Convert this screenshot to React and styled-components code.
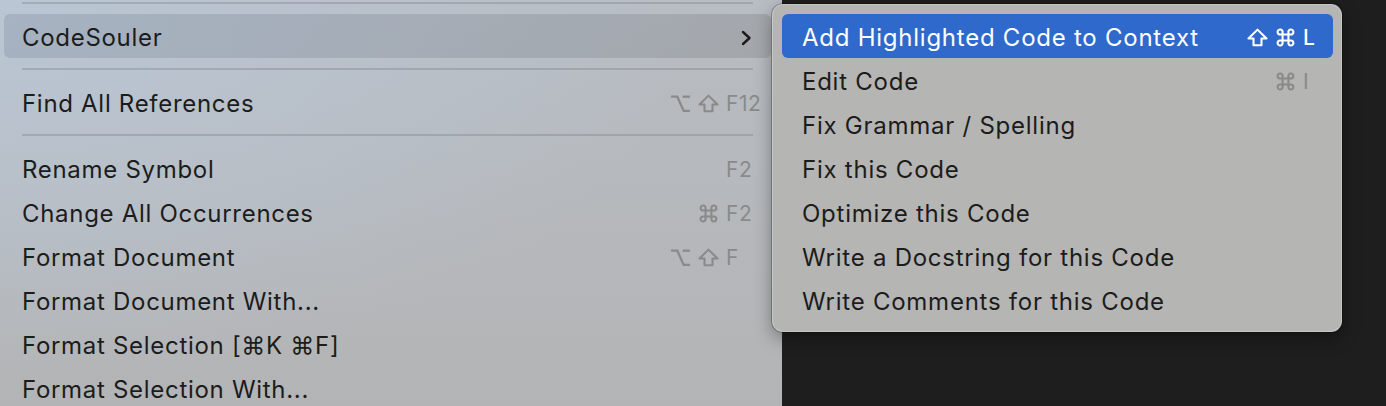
import React from 'react';
import styled, { createGlobalStyle } from 'styled-components';

const GlobalStyle = createGlobalStyle`
  html, body {
    margin: 0;
    padding: 0;
    background: #1e1e1e;
    overflow: hidden;
  }
  body {
    font-family: Inter, "Noto Sans", "DejaVu Sans", sans-serif;
    -webkit-font-smoothing: antialiased;
  }
`;

const Page = styled.div`
  position: relative;
  display: flex;
  width: 1386px;
  height: 406px;
  background: #1e1e1e;
  overflow: hidden;
`;

const MainMenu = styled.div`
  width: 782px;
  height: 100%;
  display: flex;
  flex-direction: column;
  padding: 0 11px 0 4px;
  box-sizing: border-box;
  background:
    radial-gradient(ellipse 700px 380px at 0% 0%, rgba(186, 198, 212, 1) 0%, rgba(186, 198, 212, 0) 100%),
    linear-gradient(180deg, #b8bdc3 0%, #b3b4b5 100%);
`;

const MenuStack = styled.div`
  display: flex;
  flex-direction: column;
  margin-top: -8px;
`;

const Separator = styled.div`
  height: 22px;
  display: flex;
  align-items: center;
  padding: 0 18px;
  &::after {
    content: '';
    flex: 1;
    height: 2px;
    background: rgba(120, 124, 130, 0.35);
  }
`;

const Row = styled.div`
  height: 44px;
  flex-shrink: 0;
  box-sizing: border-box;
  display: flex;
  align-items: center;
  justify-content: space-between;
  padding: 3px 11px 0 18px;
  border-radius: 6px;
  font-size: 24px;
  letter-spacing: 0.7px;
  color: #1c1c1c;
  background: ${(p) =>
    p.$hover
      ? 'linear-gradient(90deg, rgba(120,134,152,0.3) 0%, rgba(110,112,116,0.27) 100%)'
      : 'transparent'};
`;

const Submenu = styled.div`
  position: absolute;
  left: 772px;
  top: 4px;
  width: 570px;
  box-sizing: border-box;
  padding: 9px 8px 9px 9px;
  display: flex;
  flex-direction: column;
  background: #b5b5b4;
  border-radius: 11px;
  border: 1px solid rgba(255, 255, 255, 0.25);
  box-shadow: 0 6px 18px rgba(0, 0, 0, 0.35), 0 0 0 1px rgba(0, 0, 0, 0.25);
`;

const SubRow = styled.div`
  height: 44px;
  box-sizing: border-box;
  display: flex;
  align-items: center;
  justify-content: space-between;
  padding: 2px 16px 0 20px;
  border-radius: 6px;
  font-size: 24px;
  letter-spacing: 0.75px;
  color: ${(p) => (p.$active ? '#ffffff' : '#1c1c1c')};
  background: ${(p) => (p.$active ? '#2f69cb' : 'transparent')};
`;

const Keys = styled.span`
  display: flex;
  align-items: center;
  gap: 7px;
  font-size: 21px;
  letter-spacing: 0.5px;
  color: ${(p) => (p.$light ? '#ffffff' : '#8a8a8a')};
  font-weight: ${(p) => (p.$light ? 500 : 400)};
`;

const KeyName = styled.span`
  width: ${(p) => p.$w}px;
  text-align: left;
`;

const KeyIcon = styled.svg`
  width: 21px;
  height: 19px;
  display: block;
`;

const Chevron = styled.svg`
  width: 12px;
  height: 16px;
  margin-right: 8px;
  display: block;
`;

const OptionKey = () => (
  <KeyIcon viewBox="0 0 20 18" fill="none" stroke="currentColor" strokeWidth="2.2" strokeLinejoin="miter">
    <path d="M1 2.5 H7 L13 16 H19" />
    <path d="M12 2.5 H19" />
  </KeyIcon>
);

const ShiftKey = () => (
  <KeyIcon viewBox="0 0 20 18" fill="none" stroke="currentColor" strokeWidth="2" strokeLinejoin="round">
    <path d="M10 1.5 L18.6 10 H13.8 V16.4 H6.2 V10 H1.4 Z" />
  </KeyIcon>
);

const CommandKey = () => (
  <KeyIcon viewBox="0 0 20 18" fill="none" stroke="currentColor" strokeWidth="2">
    <path d="M7.2 6.2 H12.8 V11.8 H7.2 Z" />
    <path d="M7.2 6.2 V4.4 A2.4 2.4 0 1 0 4.8 6.2 H7.2" />
    <path d="M12.8 6.2 V4.4 A2.4 2.4 0 1 1 15.2 6.2 H12.8" />
    <path d="M7.2 11.8 V13.6 A2.4 2.4 0 1 1 4.8 11.8 H7.2" />
    <path d="M12.8 11.8 V13.6 A2.4 2.4 0 1 0 15.2 11.8 H12.8" />
  </KeyIcon>
);

const iconFor = {
  opt: OptionKey,
  shift: ShiftKey,
  cmd: CommandKey,
};

// modifiers sit right-aligned before a fixed column holding the key name
const Shortcut = ({ keys, light, keyWidth }) => {
  const mods = keys.filter((k) => iconFor[k]);
  const name = keys.find((k) => !iconFor[k]);
  return (
    <Keys $light={light}>
      {mods.map((k, i) => {
        const Icon = iconFor[k];
        return <Icon key={i} />;
      })}
      <KeyName $w={keyWidth}>{name}</KeyName>
    </Keys>
  );
};

const mainItems = [
  { type: 'sep' },
  { label: 'CodeSouler', hover: true, submenu: true },
  { type: 'sep' },
  { label: 'Find All References', keys: ['opt', 'shift', 'F12'] },
  { type: 'sep' },
  { label: 'Rename Symbol', keys: ['F2'] },
  { label: 'Change All Occurrences', keys: ['cmd', 'F2'] },
  { label: 'Format Document', keys: ['opt', 'shift', 'F'] },
  { label: 'Format Document With...' },
  { label: 'Format Selection [⌘K ⌘F]' },
  { label: 'Format Selection With...' },
];

const subItems = [
  { label: 'Add Highlighted Code to Context', keys: ['shift', 'cmd', 'L'], active: true },
  { label: 'Edit Code', keys: ['cmd', 'I'] },
  { label: 'Fix Grammar / Spelling' },
  { label: 'Fix this Code' },
  { label: 'Optimize this Code' },
  { label: 'Write a Docstring for this Code' },
  { label: 'Write Comments for this Code' },
];

export default function App() {
  return (
    <Page>
      <GlobalStyle />
      <MainMenu>
        <MenuStack>
          {mainItems.map((item, i) =>
            item.type === 'sep' ? (
              <Separator key={i} />
            ) : (
              <Row key={i} $hover={item.hover}>
                <span>{item.label}</span>
                {item.submenu && (
                  <Chevron viewBox="0 0 12 16" fill="none" stroke="#1c1c1c" strokeWidth="2.4" strokeLinecap="round" strokeLinejoin="round">
                    <path d="M3 2 L9.5 8 L3 14" />
                  </Chevron>
                )}
                {item.keys && <Shortcut keys={item.keys} keyWidth={34} />}
              </Row>
            )
          )}
        </MenuStack>
      </MainMenu>
      <Submenu>
        {subItems.map((item, i) => (
          <SubRow key={i} $active={item.active}>
            <span>{item.label}</span>
            {item.keys && <Shortcut keys={item.keys} light={item.active} keyWidth={14} />}
          </SubRow>
        ))}
      </Submenu>
    </Page>
  );
}
